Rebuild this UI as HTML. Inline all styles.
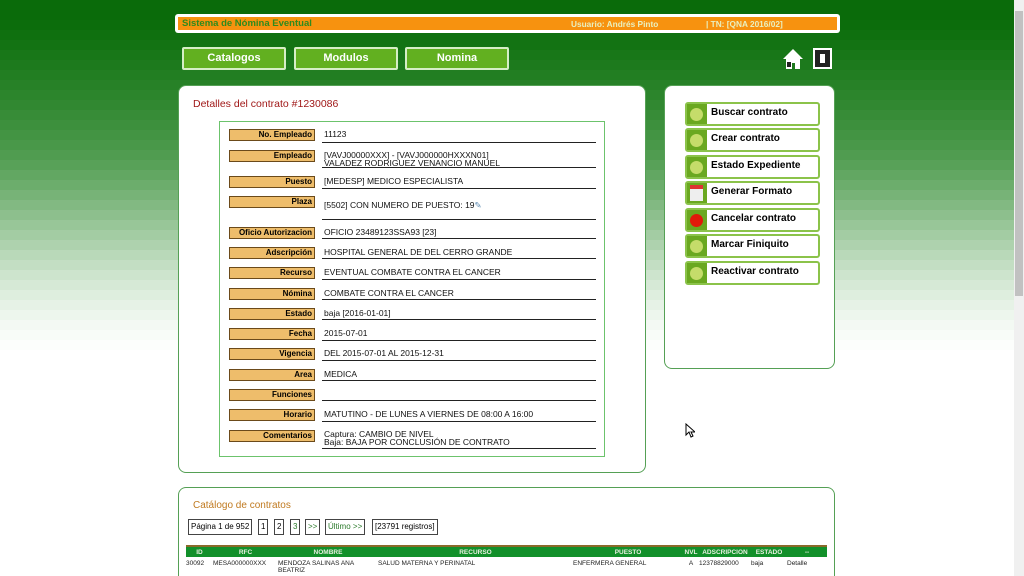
<!DOCTYPE html>
<html><head><meta charset="utf-8"><style>
*{margin:0;padding:0;box-sizing:border-box}
html,body{width:1024px;height:576px;overflow:hidden;background:#fff}
body{position:relative;font-family:"Liberation Sans",sans-serif}
.b{position:absolute;left:0;width:1024px;height:10px}
.a{position:absolute}
.top{left:175px;top:14px;width:665px;height:19px;background:#fff;border-radius:3px}
.bar{left:178px;top:17px;width:659px;height:13px;background:#f7920f;font-size:9.5px;font-weight:bold;color:#e8f0c0;line-height:12px}
.btn{top:47px;height:23px;background:#62b020;border:2px solid #d6eec6;border-radius:2px;color:#fff;font-weight:bold;font-size:11px;text-align:center;line-height:18px}
.panel{background:#fff;border:1px solid #55a055;border-radius:8px}
.lbl{left:229px;width:86px;height:12px;background:#eebd6b;border:1px solid #6b4a1a;font-size:8px;font-weight:bold;text-align:right;padding-right:2px;line-height:10px;color:#000}
.val{left:324px;font-size:8.5px;line-height:7.5px;color:#111}
.ul{left:322px;width:274px;height:1px;background:#222}
.side{left:685px;width:135px;height:24px;border:2px solid #8bc34a;border-radius:3px;background:#fff;font-size:10px;font-weight:bold;line-height:14px;padding-left:24px;padding-top:2px}
.side:before{content:"";position:absolute;left:0;top:0;width:20px;height:20px;background:#6aa820}
.dot{position:absolute;left:3px;top:4px;width:13px;height:13px;border-radius:50%;background:#c5dc6a}
.pg{top:519px;height:16px;border:1px solid #444;font-size:8px;line-height:14px;padding:0 2px}
th{font-size:6.5px;color:#e8f0e0;font-weight:bold}
td{font-size:6.5px;color:#222;vertical-align:top;line-height:7px;padding-top:3px}
</style></head><body>
<div class="b" style="top:0;height:20px;background:#0a6b0a"></div>
<div class="b" style="top:20px;background:#0c6d0c"></div>
<div class="b" style="top:30px;background:#0f700f"></div>
<div class="b" style="top:40px;background:#137313"></div>
<div class="b" style="top:50px;background:#187718"></div>
<div class="b" style="top:60px;background:#1d7a1d"></div>
<div class="b" style="top:70px;background:#227e22"></div>
<div class="b" style="top:80px;background:#278127"></div>
<div class="b" style="top:90px;background:#2c852c"></div>
<div class="b" style="top:100px;background:#318831"></div>
<div class="b" style="top:110px;background:#378c37"></div>
<div class="b" style="top:120px;background:#3d903d"></div>
<div class="b" style="top:130px;background:#439443"></div>
<div class="b" style="top:140px;background:#499849"></div>
<div class="b" style="top:150px;background:#509c50"></div>
<div class="b" style="top:160px;background:#58a158"></div>
<div class="b" style="top:170px;background:#62a762"></div>
<div class="b" style="top:180px;background:#6cad6c"></div>
<div class="b" style="top:190px;background:#77b377"></div>
<div class="b" style="top:200px;background:#82b982"></div>
<div class="b" style="top:210px;background:#8dbf8d"></div>
<div class="b" style="top:220px;background:#98c698"></div>
<div class="b" style="top:230px;background:#a3cca3"></div>
<div class="b" style="top:240px;background:#aed2ae"></div>
<div class="b" style="top:250px;background:#b9d9b9"></div>
<div class="b" style="top:260px;background:#c3dec3"></div>
<div class="b" style="top:270px;background:#cde4cd"></div>
<div class="b" style="top:280px;background:#d6e9d6"></div>
<div class="b" style="top:290px;background:#deeede"></div>
<div class="b" style="top:300px;background:#e6f2e6"></div>
<div class="b" style="top:310px;background:#edf6ed"></div>
<div class="b" style="top:320px;background:#f3f9f3"></div>
<div class="b" style="top:330px;background:#f8fcf8"></div>
<div class="b" style="top:340px;background:#fcfefc"></div>

<div class="a top"></div>
<div class="a bar"><span class="a" style="left:4px;top:1px;color:#2e8b1e">Sistema de Nómina Eventual</span><span class="a" style="left:393px;top:1px;font-size:8.3px">Usuario: Andrés Pinto</span><span class="a" style="left:528px;top:1px;font-size:8.3px">| TN: [QNA 2016/02]</span></div>
<div class="a btn" style="left:182px;width:104px">Catalogos</div>
<div class="a btn" style="left:294px;width:104px">Modulos</div>
<div class="a btn" style="left:405px;width:104px">Nomina</div>
<svg class="a" style="left:782px;top:47px" width="22" height="24" viewBox="0 0 22 24"><path d="M11 2L1 12h3v10h6v-6h3v6h5V12h3z" fill="#fff"/><rect x="5" y="15" width="4" height="5" fill="#222"/></svg>
<div class="a" style="left:813px;top:48px;width:19px;height:21px;border:2px solid #fff;background:#222"><div class="a" style="left:5px;top:4px;width:5px;height:9px;background:#fff"></div></div>

<div class="a panel" style="left:178px;top:85px;width:468px;height:388px"></div>
<div class="a" style="left:193px;top:98px;font-size:10.5px;color:#a01818">Detalles del contrato #1230086</div>
<div class="a" style="left:219px;top:121px;width:386px;height:336px;border:1px solid #6cc36c"></div>

<div class="a lbl" style="top:129px">No. Empleado</div><div class="a val" style="top:131px">11123</div><div class="a ul" style="top:142px"></div>
<div class="a lbl" style="top:150px">Empleado</div><div class="a val" style="top:152px">[VAVJ00000XXX] - [VAVJ000000HXXXN01]<br>VALADEZ RODRIGUEZ VENANCIO MANUEL</div><div class="a ul" style="top:167px"></div>
<div class="a lbl" style="top:176px">Puesto</div><div class="a val" style="top:178px">[MEDESP] MEDICO ESPECIALISTA</div><div class="a ul" style="top:188px"></div>
<div class="a lbl" style="top:196px">Plaza</div><div class="a val" style="top:202px">[5502] CON NUMERO DE PUESTO: 19<span style="color:#5a88b0">&#x270E;</span></div><div class="a ul" style="top:219px"></div>
<div class="a lbl" style="top:227px">Oficio Autorizacion</div><div class="a val" style="top:229px">OFICIO 23489123SSA93 [23]</div><div class="a ul" style="top:238px"></div>
<div class="a lbl" style="top:247px">Adscripción</div><div class="a val" style="top:249px">HOSPITAL GENERAL DE DEL CERRO GRANDE</div><div class="a ul" style="top:258px"></div>
<div class="a lbl" style="top:267px">Recurso</div><div class="a val" style="top:269px">EVENTUAL COMBATE CONTRA EL CANCER</div><div class="a ul" style="top:279px"></div>
<div class="a lbl" style="top:288px">Nómina</div><div class="a val" style="top:290px">COMBATE CONTRA EL CANCER</div><div class="a ul" style="top:299px"></div>
<div class="a lbl" style="top:308px">Estado</div><div class="a val" style="top:310px">baja [2016-01-01]</div><div class="a ul" style="top:319px"></div>
<div class="a lbl" style="top:328px">Fecha</div><div class="a val" style="top:330px">2015-07-01</div><div class="a ul" style="top:340px"></div>
<div class="a lbl" style="top:348px">Vigencia</div><div class="a val" style="top:350px">DEL 2015-07-01 AL 2015-12-31</div><div class="a ul" style="top:360px"></div>
<div class="a lbl" style="top:369px">Area</div><div class="a val" style="top:371px">MEDICA</div><div class="a ul" style="top:380px"></div>
<div class="a lbl" style="top:389px">Funciones</div><div class="a ul" style="top:400px"></div>
<div class="a lbl" style="top:409px">Horario</div><div class="a val" style="top:411px">MATUTINO - DE LUNES A VIERNES DE 08:00 A 16:00</div><div class="a ul" style="top:421px"></div>
<div class="a lbl" style="top:430px">Comentarios</div><div class="a val" style="top:431px">Captura: CAMBIO DE NIVEL<br>Baja: BAJA POR CONCLUSIÓN DE CONTRATO</div><div class="a ul" style="top:448px"></div>

<div class="a panel" style="left:664px;top:85px;width:171px;height:284px"></div>
<div class="a side" style="top:102px"><div class="dot"></div>Buscar contrato</div>
<div class="a side" style="top:128px"><div class="dot"></div>Crear contrato</div>
<div class="a side" style="top:155px"><div class="dot"></div>Estado Expediente</div>
<div class="a side" style="top:181px"><div class="a" style="left:3px;top:2px;width:13px;height:16px;background:#eee;border-top:4px solid #d33"></div>Generar Formato</div>
<div class="a side" style="top:208px"><div class="dot" style="background:#e01a0a"></div>Cancelar contrato</div>
<div class="a side" style="top:234px"><div class="dot"></div>Marcar Finiquito</div>
<div class="a side" style="top:261px"><div class="dot"></div>Reactivar contrato</div>

<div class="a panel" style="left:178px;top:487px;width:657px;height:100px;border-bottom:none"></div>
<div class="a" style="left:193px;top:500px;font-size:10px;color:#c07a20">Catálogo de contratos</div>
<div class="a pg" style="left:188px">Página 1 de 952</div>
<div class="a pg" style="left:258px">1</div>
<div class="a pg" style="left:274px">2</div>
<div class="a pg" style="left:290px;color:#2a7a2a">3</div>
<div class="a pg" style="left:305px;color:#2a7a2a">&gt;&gt;</div>
<div class="a pg" style="left:325px;color:#2a7a2a">Último &gt;&gt;</div>
<div class="a pg" style="left:372px">[23791 registros]</div>
<table class="a" style="left:186px;top:545px;width:641px;border-collapse:collapse">
<tr style="background:#12902a;height:11px;border-top:2px solid #8a6a2a"><th style="width:27px">ID</th><th style="width:65px">RFC</th><th style="width:100px">NOMBRE</th><th style="width:195px">RECURSO</th><th style="width:110px">PUESTO</th><th style="width:16px">NVL</th><th style="width:52px">ADSCRIPCION</th><th style="width:36px">ESTADO</th><th>--</th></tr>
<tr><td>30092</td><td>MESA000000XXX</td><td>MENDOZA SALINAS ANA BEATRIZ</td><td>SALUD MATERNA Y PERINATAL</td><td>ENFERMERA GENERAL</td><td style="text-align:center">A</td><td>12378829000</td><td>baja</td><td>Detalle</td></tr>
</table>

<div class="a" style="left:1014px;top:0;width:10px;height:576px;background:#f0f0f0"></div>
<div class="a" style="left:1015px;top:11px;width:8px;height:285px;background:#c1c1c1"></div>
<svg class="a" style="left:685px;top:423px" width="10" height="15"><path d="M1 1v11l3-3 2 5 2-1-2-4h4z" fill="#fff" stroke="#000" stroke-width="1"/></svg>
</body></html>
